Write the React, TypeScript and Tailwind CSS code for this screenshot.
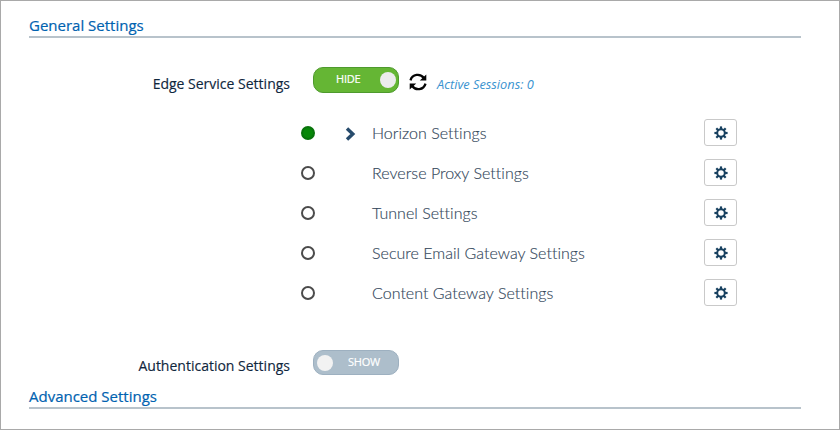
import React from "react";

const TEETH = [0, 45, 90, 135, 180, 225, 270, 315];

function GearIcon() {
  return (
    <svg className="h-[14px] w-[14px] text-[#17405f]" viewBox="0 0 14 14" aria-hidden="true">
      <circle cx="7" cy="7" r="3.8" fill="none" stroke="currentColor" strokeWidth="2" />
      {TEETH.map((a) => (
        <rect key={a} x="5.9" y="0.4" width="2.2" height="2.6" fill="currentColor" transform={`rotate(${a} 7 7)`} />
      ))}
    </svg>
  );
}

function RefreshIcon() {
  return (
    <svg className="h-[18px] w-[18px]" viewBox="0 0 18 18" aria-hidden="true">
      <path d="M1.5 7.4C3.2 0.8 11.5 0.2 14.8 5M16.5 10.6C14.8 17.2 6.5 17.8 3.2 13" fill="none" stroke="#050505" strokeWidth="2.3" />
      <path d="M17.3 1.6V7.4H10.8ZM.7 16.4V10.6H7.2Z" fill="#050505" />
    </svg>
  );
}

function SectionTitle({ children }: { children: React.ReactNode }) {
  return (
    <h2 className="h-[24px] w-[772px] border-b-2 border-[#b8c3cb] text-[15px] leading-[22px] text-[#0062b0] [-webkit-text-stroke:0.2px_#0062b0]">
      <span className="inline-block whitespace-nowrap">{children}</span>
    </h2>
  );
}

function Row({ label, active = false }: { label: string; active?: boolean }) {
  return (
    <li className="flex h-10 items-center">
      <span className={`h-[14px] w-[14px] rounded-full border-2 ${active ? "border-[#08730b] bg-[#078708]" : "border-[#4b4b4b] bg-white"}`} />
      <span className="flex w-[57px] justify-start pl-[30px] pt-[2px]">
        {active && (
          <svg className="h-[14px] w-[11px]" viewBox="0 0 11 14" aria-hidden="true">
            <path d="M2 1.5L7.8 7L2 12.5" fill="none" stroke="#274b6c" strokeWidth="3.4" />
          </svg>
        )}
      </span>
      <span className="w-[332px] whitespace-nowrap font-['Lato',sans-serif] text-[16px] font-light tracking-[0.03px] text-[#33475b] [-webkit-text-stroke:0.15px_#33475b]">{label}</span>
      <button aria-label={label} className="-mt-px flex h-[27px] w-[33px] items-center justify-center rounded-[3px] border border-[#c9c9c9] bg-white">
        <GearIcon />
      </button>
    </li>
  );
}

export default function App() {
  return (
    <main className="h-[430px] w-[840px] overflow-hidden border border-[#a9a9a9] bg-white pl-7 pt-[13px] font-['Open_Sans','Noto_Sans',sans-serif]">
      <SectionTitle>General Settings</SectionTitle>
      <div className="mt-[29px] flex h-[26px] items-center">
        <span className="w-[261px] whitespace-nowrap pt-[6px] text-right text-[14px] text-[#10273d] [-webkit-text-stroke:0.15px_#10273d]">Edge Service Settings</span>
        <button className="ml-[23px] flex h-[26px] w-[86px] items-center justify-between rounded-[10px] border border-[#4e9a2d] bg-[#65b634] pl-[22px] pr-[2px] text-[11px] tracking-[-0.2px] text-white [-webkit-text-stroke:0.2px_white]">
          <span className="-mt-px">HIDE</span>
          <span className="h-4 w-4 rounded-full bg-[#ececec]" />
        </button>
        <span className="ml-[10px] mt-[3px]"><RefreshIcon /></span>
        <span className="ml-[10px] whitespace-nowrap pt-[9px] text-[12.8px] italic text-[#3a93d0]">Active Sessions: 0</span>
      </div>
      <ul className="ml-[272px] mt-5">
        <Row label="Horizon Settings" active />
        <Row label="Reverse Proxy Settings" />
        <Row label="Tunnel Settings" />
        <Row label="Secure Email Gateway Settings" />
        <Row label="Content Gateway Settings" />
      </ul>
      <div className="mt-[37px] flex h-[25px] items-center">
        <span className="w-[261px] whitespace-nowrap pt-[6px] text-right text-[14px] text-[#10273d] [-webkit-text-stroke:0.15px_#10273d]">Authentication Settings</span>
        <button className="ml-[23px] flex h-[25px] w-[86px] items-center rounded-[10px] border border-[#9db0c0] bg-[#adbecb] pl-[3px] text-[11px] tracking-[-0.2px] text-white [-webkit-text-stroke:0.2px_white]">
          <span className="h-4 w-4 rounded-full bg-[#f2f2f2]" />
          <span className="-mt-px ml-[15px]">SHOW</span>
        </button>
      </div>
      <div className="mt-[10px]">
        <SectionTitle>Advanced Settings</SectionTitle>
      </div>
    </main>
  );
}
